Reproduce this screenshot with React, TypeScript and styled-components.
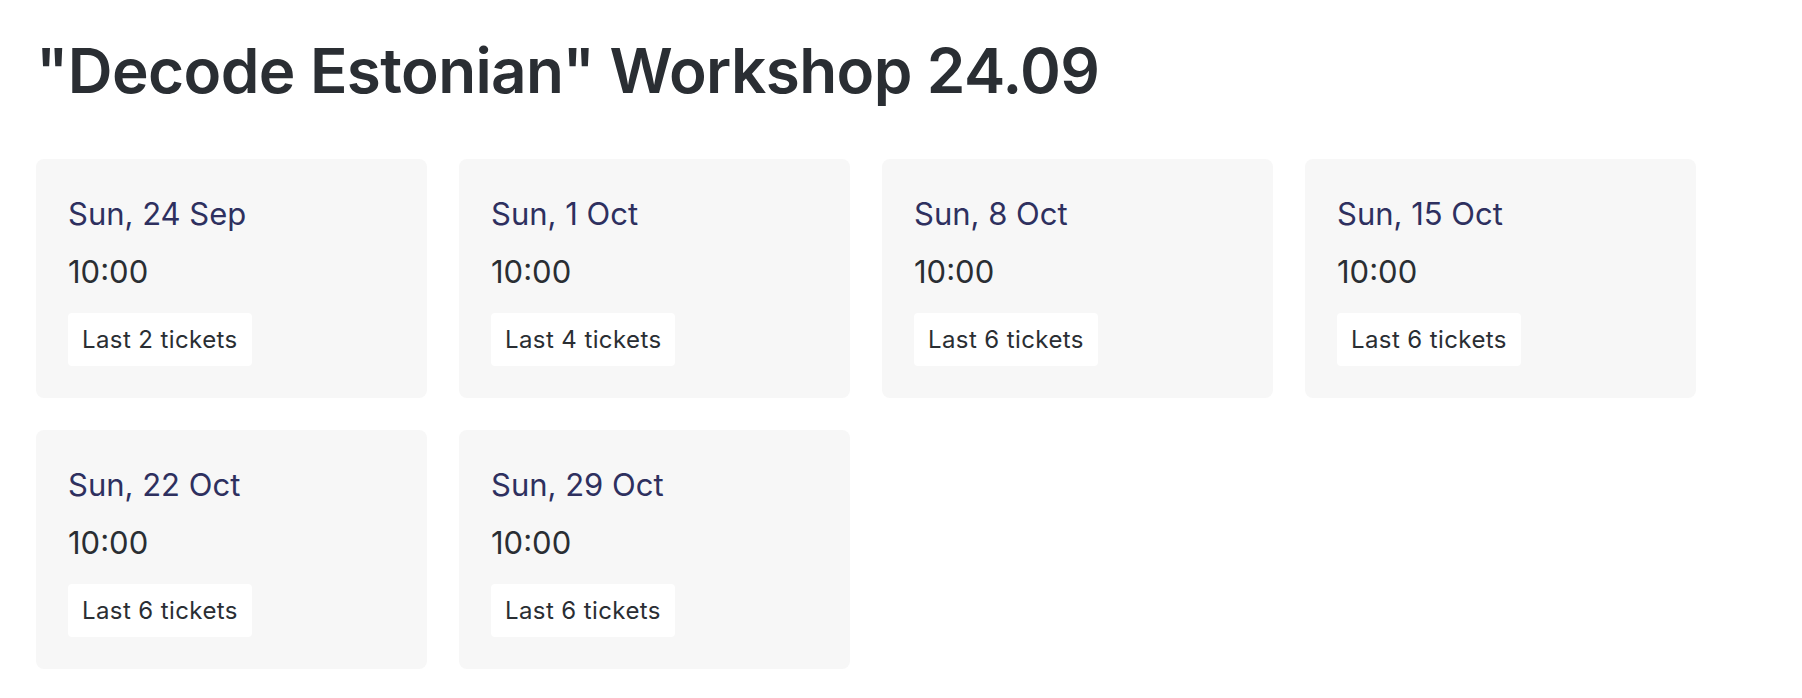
import styled, { createGlobalStyle } from "styled-components";

const colors = {
  ink: "#2a2e33",
  navy: "#2e305f",
  card: "#f7f7f7",
  white: "#ffffff",
};

const GlobalStyle = createGlobalStyle`
  body {
    margin: 0;
    background: ${colors.white};
    font-family: Inter, "Open Sans", sans-serif;
    color: ${colors.ink};
  }
`;

const Page = styled.main`
  padding: 34px 36px 0;
`;

const Title = styled.h1`
  margin: 0 0 51px;
  font-size: 62px;
  line-height: 1.2;
  font-weight: 600;
  letter-spacing: -0.6px;
  color: ${colors.ink};
`;

const Grid = styled.div`
  display: grid;
  grid-template-columns: repeat(4, 391px);
  gap: 32px;
`;

const Card = styled.div`
  background: ${colors.card};
  border-radius: 8px;
  padding: 35px 32px 32px;
  height: 239px;
  box-sizing: border-box;
  display: flex;
  flex-direction: column;
  align-items: flex-start;
`;

const DateText = styled.div`
  font-size: 31px;
  line-height: 40px;
  color: ${colors.navy};
`;

const TimeText = styled.div`
  margin-top: 18px;
  font-size: 31px;
  line-height: 40px;
  color: ${colors.ink};
`;

const Badge = styled.div`
  margin-top: 21px;
  background: ${colors.white};
  border-radius: 4px;
  padding: 0 14px;
  height: 53px;
  display: flex;
  align-items: center;
  font-size: 24px;
  letter-spacing: 0.4px;
  color: ${colors.ink};
`;

const sessions = [
  { date: "Sun, 24 Sep", left: 2 },
  { date: "Sun, 1 Oct", left: 4 },
  { date: "Sun, 8 Oct", left: 6 },
  { date: "Sun, 15 Oct", left: 6 },
  { date: "Sun, 22 Oct", left: 6 },
  { date: "Sun, 29 Oct", left: 6 },
];

export default function App() {
  return (
    <>
      <GlobalStyle />
      <Page>
        <Title>"Decode Estonian" Workshop 24.09</Title>
        <Grid>
          {sessions.map((s) => (
            <Card key={s.date}>
              <DateText>{s.date}</DateText>
              <TimeText>10:00</TimeText>
              <Badge>Last {s.left} tickets</Badge>
            </Card>
          ))}
        </Grid>
      </Page>
    </>
  );
}
